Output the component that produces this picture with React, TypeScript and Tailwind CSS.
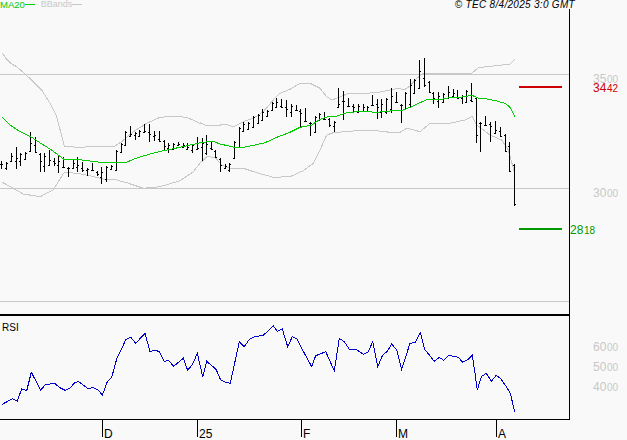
import React from "react";

type P = number[][];

const scale = (pts: P, dx: number, dy = 0) => pts.map(([x, y]) => [x / 3 + dx, y / 3 + dy]);
const toPts = (pts: P) => pts.map(([x, y]) => `${x.toFixed(1)},${y.toFixed(1)}`).join(" ");

const ma = [
  ...scale([[7,352],[30,375],[60,395],[95,412],[125,432],[150,447],[175,465],[192,478],[230,478],[270,483],[300,487],[345,487],[380,487],[400,478],[430,468],[465,458],[500,450],[540,442],[580,433]], 0),
  ...scale([[8,427],[40,424],[60,432],[100,441],[135,441],[165,435],[195,428],[230,412],[270,397],[300,382],[335,375],[360,358],[385,350],[410,348],[440,338],[470,335],[500,335],[530,337],[570,333],[610,330]], 200),
  ...scale([[0,322],[30,308],[55,297],[100,297],[125,292],[150,292],[185,286],[205,294],[230,297],[260,303],[285,310],[300,322],[314,350]], 410),
];
const upper = [
  ...scale([[7,160],[20,178],[35,192],[50,200],[75,222],[100,245],[125,270],[150,310],[170,350],[193,438],[230,442],[280,440],[345,438],[365,425],[400,395],[440,370],[480,352],[520,349],[560,352],[600,370]], 0),
  ...scale([[0,367],[20,377],[80,374],[100,380],[130,365],[160,355],[190,335],[220,300],[240,280],[270,268],[300,250],[330,250],[360,265],[380,290],[395,300],[418,292],[445,280],[500,280],[540,276],[590,266],[615,268]], 200),
  ...scale([[0,258],[15,240],[35,222],[110,221],[185,220],[205,203],[250,198],[300,192],[314,178]], 410),
];
const lower = [
  ...scale([[7,547],[40,565],[70,582],[120,590],[160,570],[175,545],[193,517],[230,520],[270,527],[310,537],[350,540],[380,548],[430,565],[480,560],[540,542],[580,515]], 0),
  ...scale([[0,490],[20,470],[45,472],[65,495],[90,505],[130,505],[170,518],[220,532],[270,530],[310,512],[340,490],[360,450],[380,405],[400,398],[470,392],[530,392],[570,397],[600,397],[620,385]], 200),
  ...scale([[0,387],[30,395],[58,372],[120,370],[165,360],[187,349],[200,375],[240,405],[275,420],[295,450],[314,520]], 410),
];
const rsi = [
  ...scale([[7,313],[37,296],[52,303],[65,267],[80,272],[94,217],[122,270],[137,253],[165,251],[180,263],[195,271],[210,265],[222,250],[235,244],[265,267],[278,262],[295,270],[307,286],[322,245],[335,232],[350,177],[378,118],[392,112],[407,130],[435,100],[450,155],[465,150],[478,155],[493,185],[505,181],[521,199],[550,175],[563,211],[578,192],[592,160]], 0, 300),
  ...scale([[8,230],[20,184],[48,208],[62,240],[77,247],[91,250],[118,125],[133,140],[148,118],[165,110],[190,106],[220,78],[232,94],[247,87],[263,140],[277,110],[290,116],[305,145],[335,200],[347,167],[377,155],[403,212],[418,115],[433,125],[448,148],[470,149],[490,163],[505,155],[518,125],[533,200],[548,165],[561,155],[575,132],[590,150],[605,208]], 200, 300),
  ...scale([[0,130],[16,127],[31,98],[44,148],[58,165],[73,184],[88,172],[101,181],[116,166],[145,172],[158,187],[172,180],[187,166],[195,220],[202,270],[214,230],[229,220],[244,244],[259,226],[272,236],[287,257],[301,280],[314,335]], 410, 300),
];

const raw1 = [[7,483,507],[22,485,510],[37,460,485],[52,441,507],[64,460,497],[79,455,480],[94,397,455],[109,410,460],[122,460,515],[136,460,515],[151,450,497],[165,475,497],[178,468,518],[193,472,505],[208,500,530],[221,477,507],[235,472,515],[250,487,515],[265,505,527],[278,490,512],[293,512,527],[307,500,553],[322,497,545],[335,495,510],[350,450,512],[365,430,460],[379,393,437],[392,379,410],[407,395,420],[421,390,410],[436,372,400],[449,372,425],[464,392,422],[479,393,425],[494,420,450],[507,428,460],[521,430,450],[536,425,438],[551,428,445],[564,430,450],[578,432,460]];
const raw2 = [[-7,411,450],[8,415,483],[20,405,465],[35,425,450],[49,450,475],[62,475,517],[77,493,507],[91,490,517],[106,423,478],[119,380,445],[133,367,395],[148,365,390],[163,347,385],[176,342,372],[190,327,362],[205,330,352],[219,307,332],[232,295,325],[247,298,325],[262,300,350],[277,312,352],[290,315,332],[304,327,380],[319,325,365],[334,365,407],[347,347,400],[361,340,362],[376,337,360],[391,355,380],[404,362,395],[418,265,325],[433,272,360],[448,293,322],[462,312,340],[476,313,340],[491,312,335],[504,317,337],[518,285,317],[533,298,358],[547,297,355],[561,293,342],[575,265,340],[590,275,308],[605,313,370],[617,277,330]];
const raw3 = [[2,238,322],[16,238,282],[31,180,268],[44,175,260],[59,243,280],[73,275,313],[88,275,325],[101,278,308],[116,258,298],[131,268,295],[145,270,298],[158,285,313],[172,270,308],[187,250,305],[202,290,430],[214,367,455],[229,347,377],[244,367,425],[259,362,403],[272,380,410],[287,403,455],[301,427,515],[314,493,617]];

const bars = [
  ...raw1.map(([x, t, b]) => [x / 3, t / 3, b / 3]),
  ...raw2.map(([x, t, b]) => [x / 3 + 200, t / 3, b / 3]),
  ...raw3.map(([x, t, b]) => [x / 3 + 410, t / 3, b / 3]),
].map((b) => b.map(Math.round));

const clamp = (v: number, a: number, b: number) => Math.max(a, Math.min(b, v));

function Bars() {
  return (
    <g stroke="#000" strokeWidth={1} shapeRendering="crispEdges">
      {bars.map(([x, t, b], i) => {
        const prev = bars[i - 1];
        const next = bars[i + 1];
        const open = prev ? clamp(Math.round((prev[1] + prev[2]) / 2 + 3), t + 1, b - 1) : t + 3;
        const close = next ? clamp(Math.round((next[1] + next[2]) / 2 - 2), t + 1, b - 1) : b - 2;
        return (
          <g key={i}>
            <line x1={x - 0.5} x2={x - 0.5} y1={t} y2={b} />
            <line x1={x - 2} x2={x - 1} y1={open + 0.5} y2={open + 0.5} />
            <line x1={x} x2={x + 1} y1={close + 0.5} y2={close + 0.5} />
          </g>
        );
      })}
    </g>
  );
}

function Price({ x, y, a, b, fill }: { x: number; y: number; a: string; b: string; fill: string }) {
  return (
    <g fill={fill} style={{ fontFamily: '"Liberation Sans", Arial, sans-serif' }}>
      <text x={x} y={y} fontSize={12}>{a}</text>
      <text x={x + 14} y={y} fontSize={10}>{b}</text>
    </g>
  );
}

export default function App() {
  const axis = [
    [102, "D"],
    [197, "25"],
    [301, "F"],
    [396, "M"],
    [496, "A"],
  ] as [number, string][];
  return (
    <div className="w-[627px] h-[440px] overflow-hidden bg-[#f9f9f9] font-['Liberation_Sans',Arial,sans-serif]">
      <div className="flex h-[9px] items-center justify-between pr-[52px] leading-none">
        <div className="flex items-center">
          <span className="text-[9.5px] text-[#00cc00]">MA20</span>
          <span className="h-px w-[10px] bg-[#00cc00]" />
          <span className="ml-[6px] text-[9px] text-[#c8c8c8]">BBands</span>
          <span className="h-px w-[10px] bg-[#c8c8c8]" />
        </div>
        <span className="text-[10px] italic tracking-[0.3px] text-black">© TEC 8/4/2025 3:0 GMT</span>
      </div>
      <svg width={627} height={431} viewBox="0 9 627 431" className="block">
        <g stroke="#c8c8c8" shapeRendering="crispEdges">
          <line x1={0} x2={569} y1={74.5} y2={74.5} />
          <line x1={0} x2={569} y1={188.5} y2={188.5} />
          <line x1={0} x2={569} y1={301.5} y2={301.5} />
        </g>
        <polyline points={toPts(upper)} fill="none" stroke="#c8c8c8" shapeRendering="crispEdges" />
        <polyline points={toPts(lower)} fill="none" stroke="#c8c8c8" shapeRendering="crispEdges" />
        <Bars />
        <polyline points={toPts(ma)} fill="none" stroke="#00cc00" shapeRendering="crispEdges" />
        <g shapeRendering="crispEdges">
          <line x1={519} x2={562} y1={87} y2={87} stroke="#cc0000" strokeWidth={2} />
          <line x1={519} x2={562} y1={229} y2={229} stroke="#009900" strokeWidth={2} />
          <line x1={569.5} x2={569.5} y1={9} y2={420} stroke="#000" />
          <line x1={0} x2={570} y1={315} y2={315} stroke="#000" strokeWidth={2} />
          <line x1={0} x2={570} y1={419.5} y2={419.5} stroke="#000" />
          {axis.map(([x]) => (
            <line key={x} x1={x + 0.5} x2={x + 0.5} y1={419} y2={437} stroke="#000" />
          ))}
        </g>
        <polyline points={toPts(rsi)} fill="none" stroke="#0000cc" shapeRendering="crispEdges" />
        <Price x={593} y={83} a="35" b="00" fill="#c8c8c8" />
        <Price x={593} y={92} a="34" b="42" fill="#cc0000" />
        <Price x={593} y={197} a="30" b="00" fill="#c8c8c8" />
        <Price x={570} y={234} a="28" b="18" fill="#009900" />
        <Price x={593} y={351} a="60" b="00" fill="#c8c8c8" />
        <Price x={593} y={371} a="50" b="00" fill="#c8c8c8" />
        <Price x={593} y={391} a="40" b="00" fill="#c8c8c8" />
        <g fill="#000" fontSize={10} style={{ fontFamily: '"Liberation Sans", Arial, sans-serif' }}>
          <text x={2} y={331}>RSI</text>
        </g>
        <g fill="#000" fontSize={12} style={{ fontFamily: '"Liberation Sans", Arial, sans-serif' }}>
          {axis.map(([x, l]) => (
            <text key={l} x={x + 2} y={438}>{l}</text>
          ))}
        </g>
      </svg>
    </div>
  );
}
